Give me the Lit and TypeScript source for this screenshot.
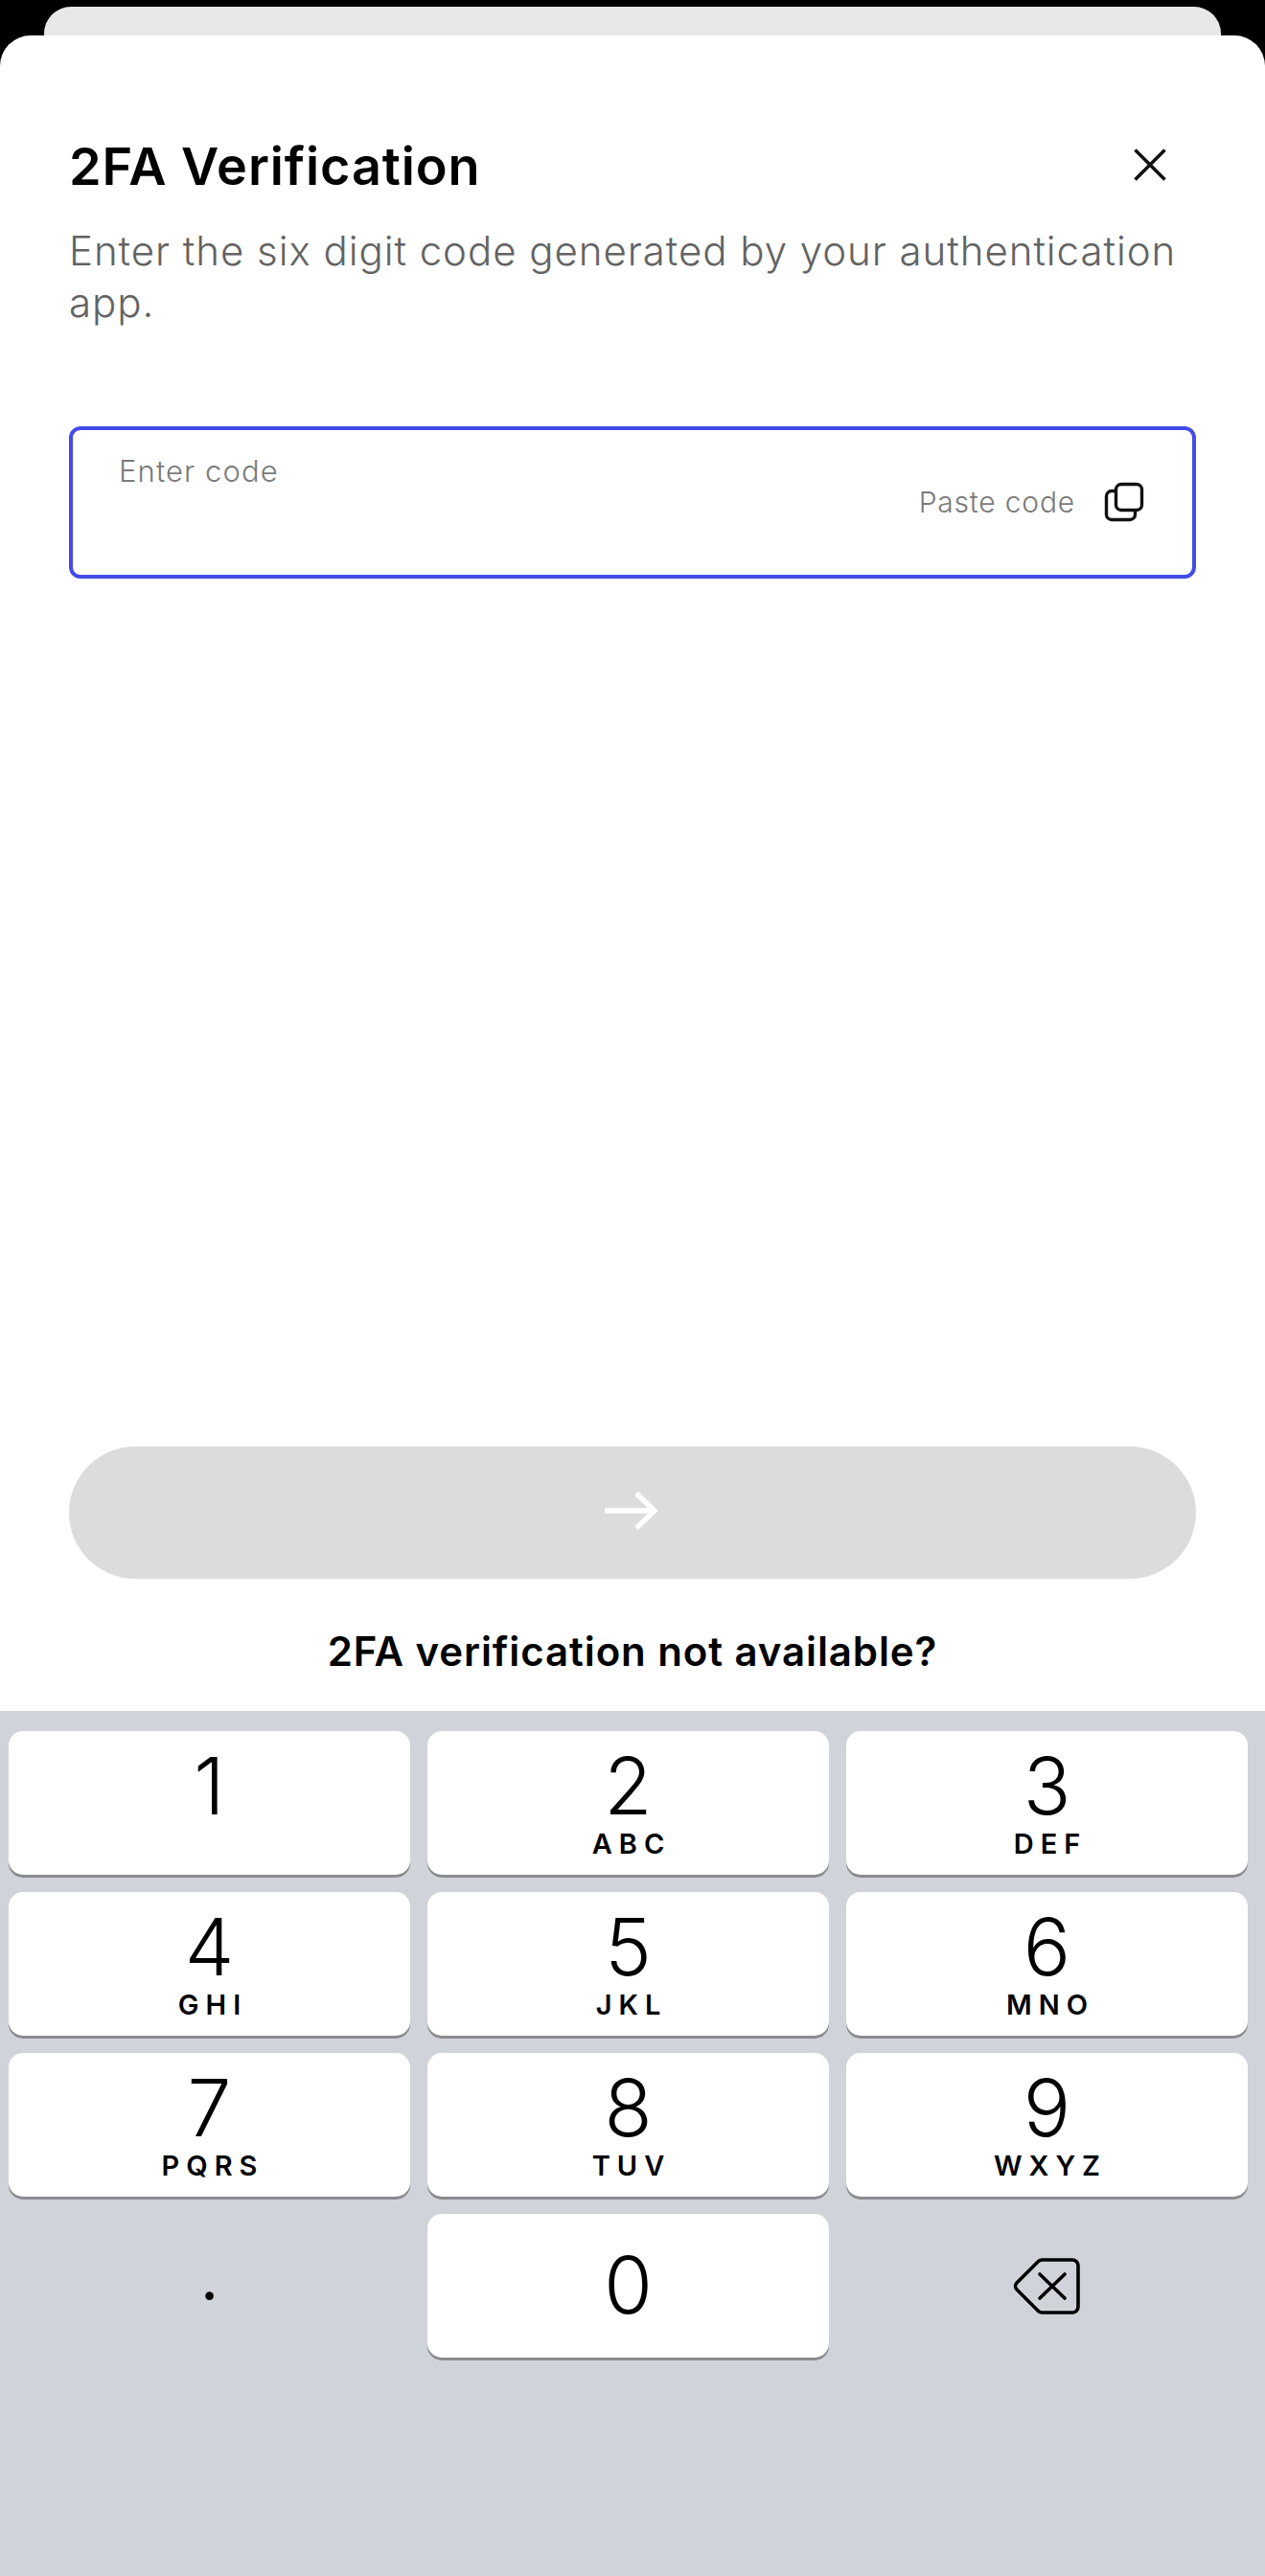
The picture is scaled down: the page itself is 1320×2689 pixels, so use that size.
import { LitElement, css, html } from "lit";
import { customElement } from "lit/decorators.js";

const keys = [
  { digit: "1", letters: "" },
  { digit: "2", letters: "ABC" },
  { digit: "3", letters: "DEF" },
  { digit: "4", letters: "GHI" },
  { digit: "5", letters: "JKL" },
  { digit: "6", letters: "MNO" },
  { digit: "7", letters: "PQRS" },
  { digit: "8", letters: "TUV" },
  { digit: "9", letters: "WXYZ" },
];

@customElement("app-root")
export class AppRoot extends LitElement {
  static styles = css`
    :host {
      display: block;
      width: 1320px;
      height: 2689px;
      background: #000;
      font-family: Inter, "Liberation Sans", sans-serif;
      color: #000;
    }

    .page {
      display: flex;
      flex-direction: column;
      height: 100%;
      padding-top: 7px;
      box-sizing: border-box;
    }

    .back-card {
      height: 30px;
      margin: 0 46px;
      background: #e8e8e8;
      border-radius: 28px 28px 0 0;
    }

    .sheet {
      height: 1749px;
      box-sizing: border-box;
      padding: 112px 72px 0;
      background: #fff;
      border-radius: 32px 32px 0 0;
      display: flex;
      flex-direction: column;
    }

    .head {
      display: flex;
      justify-content: space-between;
      align-items: center;
      height: 50px;
    }

    h1 {
      margin: 0;
      font-size: 54px;
      line-height: 50px;
      font-weight: 600;
      letter-spacing: 0.9px;
    }

    .close {
      width: 34px;
      height: 34px;
      margin: 0 31px 4px 0;
      display: block;
    }

    .sub {
      margin: 36px 0 0;
      font-size: 42px;
      line-height: 54px;
      font-weight: 300;
      color: #636363;
      letter-spacing: 0.95px;
    }

    .field {
      margin-top: 102px;
      height: 159px;
      box-sizing: border-box;
      border: 4px solid #434be8;
      border-radius: 12px;
      padding: 25px 50px 0 48px;
      display: flex;
      justify-content: space-between;
    }

    .label {
      font-size: 31px;
      line-height: 36px;
      font-weight: 300;
      color: #7a7a7a;
      letter-spacing: 1.1px;
    }

    .paste {
      display: flex;
      align-items: center;
      gap: 30px;
      height: 78px;
      margin-top: 11px;
      font-size: 30px;
      font-weight: 300;
      color: #7a7a7a;
      letter-spacing: 0.8px;
    }

    .paste svg {
      width: 42px;
      height: 42px;
      display: block;
    }

    .go {
      margin-top: auto;
      height: 138px;
      border-radius: 69px;
      background: #dcdcdc;
      display: flex;
      align-items: center;
      justify-content: center;
    }

    .go svg {
      width: 58px;
      height: 42px;
      display: block;
      margin-bottom: 4px;
    }

    .alt {
      margin: 52px 0 38px;
      height: 48px;
      line-height: 48px;
      text-align: center;
      font-size: 42px;
      font-weight: 600;
      letter-spacing: 0.9px;
    }

    .keyboard {
      flex: 1;
      background: #d0d3d9;
      box-sizing: border-box;
      padding: 21px 18px 0 9px;
    }

    .keys {
      display: grid;
      grid-template-columns: repeat(3, 419px);
      grid-auto-rows: 150px;
      gap: 18px;
    }

    .key {
      display: flex;
      flex-direction: column;
      align-items: center;
    }

    .key.solid {
      background: #fff;
      border-radius: 15px;
      box-shadow: 0 3px 0 #8a8b8f;
    }

    .digit {
      margin-top: 15px;
      font-size: 82px;
      line-height: 86px;
      font-weight: 300;
    }

    .letters {
      height: 30px;
      margin: 2px -7px 0 0;
      line-height: 30px;
      font-size: 29px;
      font-weight: 600;
      letter-spacing: 7px;
    }

    .key.single {
      justify-content: center;
    }

    .key.single .digit {
      margin-top: 0;
    }

    .dot {
      font-size: 82px;
      line-height: 86px;
      font-weight: 300;
      margin-top: 18px;
    }

    .backspace {
      width: 73px;
      height: 63px;
      display: block;
    }
  `;

  render() {
    return html`
      <div class="page">
        <div class="back-card"></div>
        <section class="sheet">
          <div class="head">
            <h1>2FA Verification</h1>
            <svg class="close" viewBox="0 0 34 34" fill="none" stroke="#111" stroke-width="3.6">
              <path d="M1.5 1.5 32.5 32.5M32.5 1.5 1.5 32.5" />
            </svg>
          </div>
          <p class="sub">Enter the six digit code generated by your authentication app.</p>
          <div class="field">
            <span class="label">Enter code</span>
            <span class="paste">
              Paste code
              <svg viewBox="0 0 42 42" fill="none" stroke="#111" stroke-width="3.4" stroke-linejoin="round">
                <rect x="12.5" y="2.5" width="27" height="27" rx="5.5" />
                <path d="M12.5 9.5H8A5.5 5.5 0 0 0 2.5 15V34A5.5 5.5 0 0 0 8 39.5H27A5.5 5.5 0 0 0 32.5 34V29.5" />
              </svg>
            </span>
          </div>
          <div class="go">
            <svg viewBox="0 0 58 42" fill="none" stroke="#fff" stroke-width="5.5">
              <path d="M0 21H52M33 3 52 21 33 39" />
            </svg>
          </div>
          <div class="alt">2FA verification not available?</div>
        </section>
        <section class="keyboard">
          <div class="keys">
            ${keys.map(
              (k) => html`
                <div class="key solid">
                  <span class="digit">${k.digit}</span>
                  <span class="letters">${k.letters}</span>
                </div>
              `
            )}
            <div class="key"><span class="dot">.</span></div>
            <div class="key solid single"><span class="digit">0</span></div>
            <div class="key single">
              <svg class="backspace" viewBox="0 0 73 63" fill="none" stroke="#000" stroke-width="3.6" stroke-linecap="round" stroke-linejoin="round">
                <path d="M31 4H63A6 6 0 0 1 69 10V53A6 6 0 0 1 63 59H31A6 6 0 0 1 27 57L5 35A5 5 0 0 1 5 28L27 6A6 6 0 0 1 31 4Z" />
                <path d="M29 19 55 44M55 19 29 44" />
              </svg>
            </div>
          </div>
        </section>
      </div>
    `;
  }
}
